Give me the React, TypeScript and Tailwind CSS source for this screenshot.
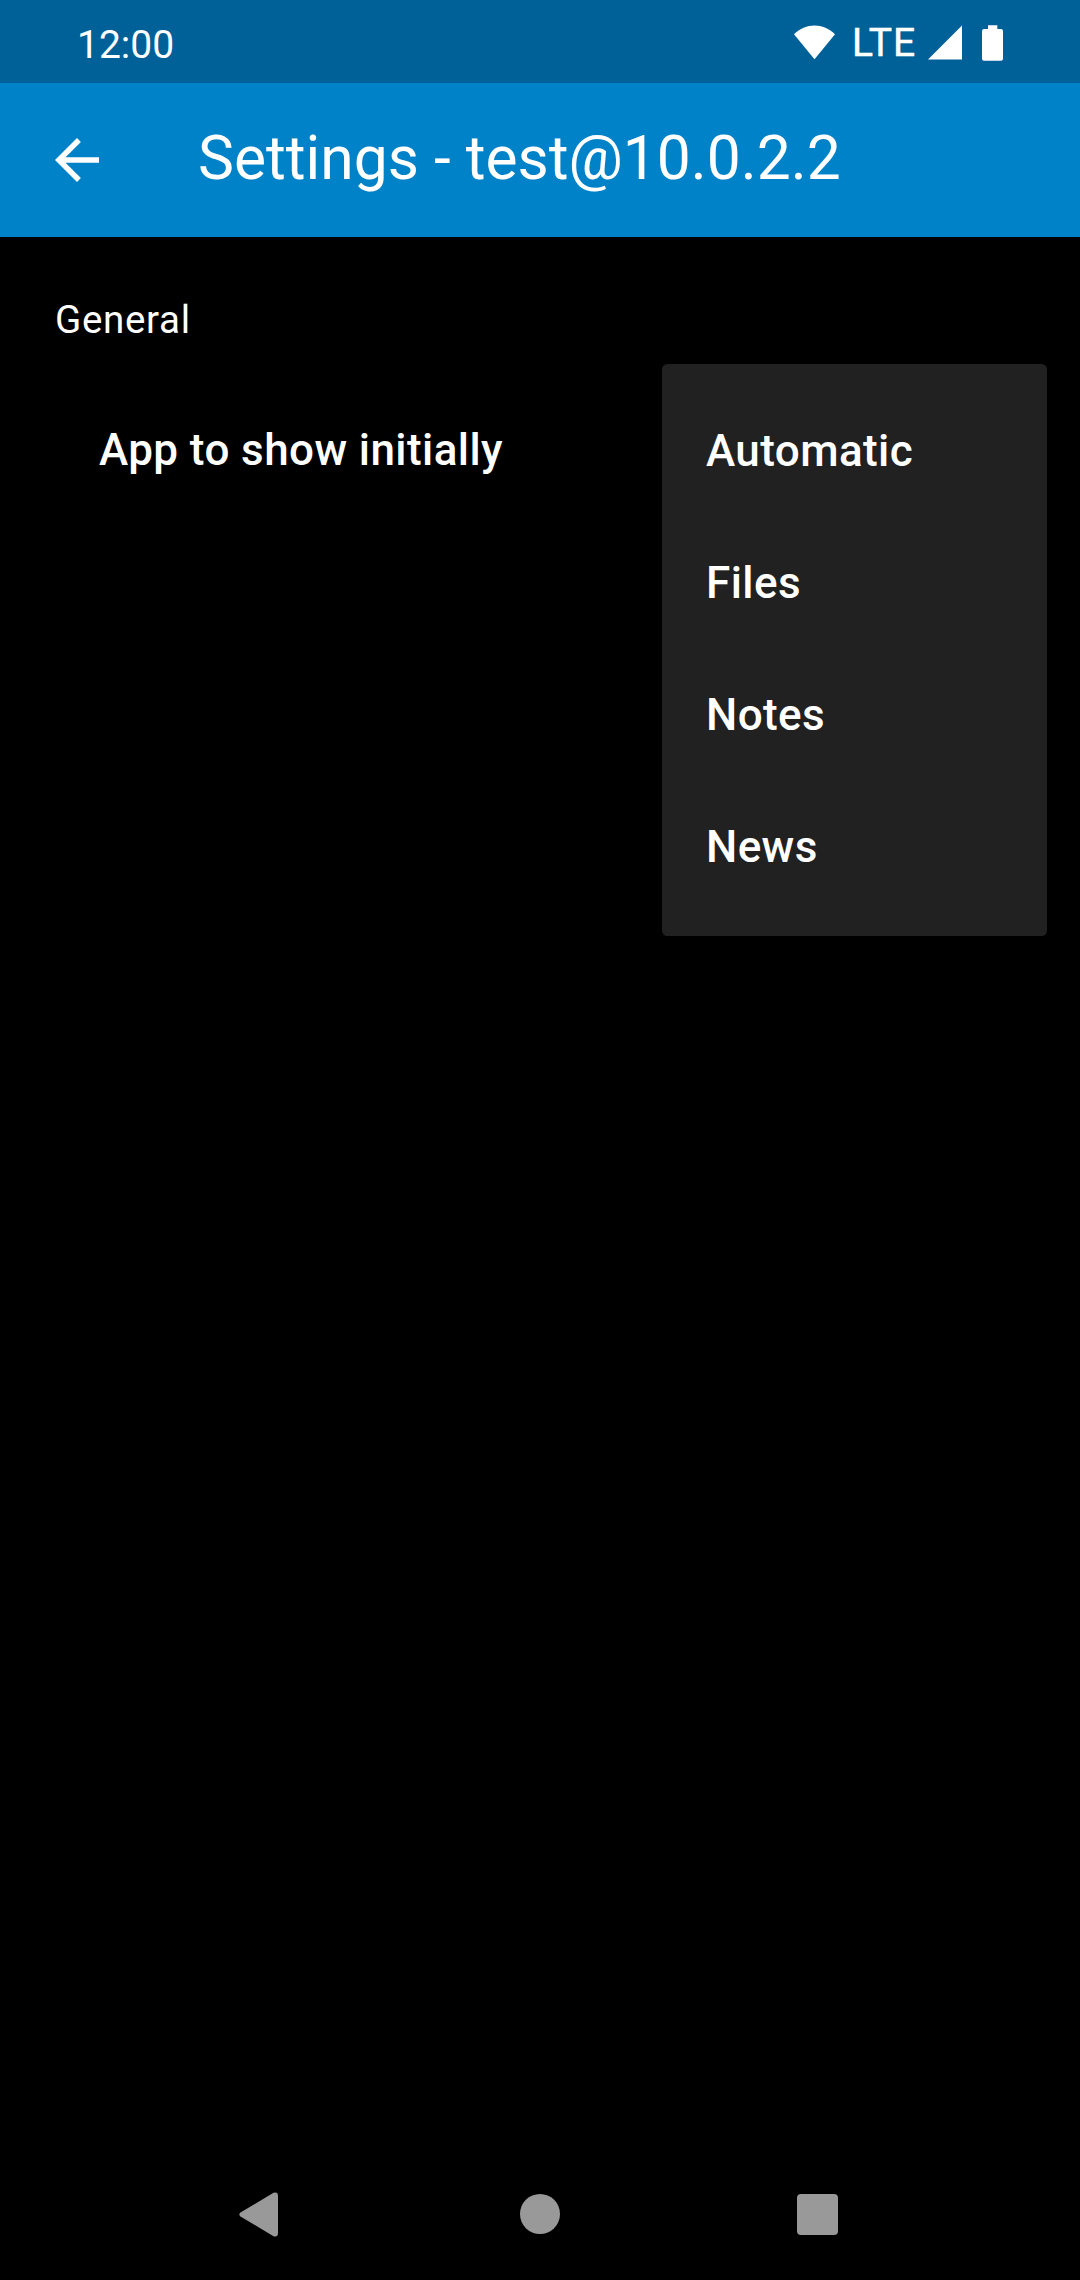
const items = ['Automatic', 'Files', 'Notes', 'News'];

export default function App() {
  return (
    <div className="relative flex h-[2280px] w-[1080px] flex-col overflow-hidden bg-black font-['Roboto',sans-serif] text-white">
      <div className="flex h-[83px] items-start justify-between bg-[#006199] pl-[77px] pr-[77px]">
        <span className="pt-[22px] text-[39px] leading-[46px]">12:00</span>
        <div className="flex h-[83px] items-start">
          <svg className="mt-[25px] h-[34px] w-[41px]" viewBox="0 0 41 34" fill="#fff">
            <path d="M20.500 34.300 L0 9.300 C11.500 -2.600 29.500 -2.600 41 9.300 Z" />
          </svg>
          <span className="ml-[17px] mt-[20px] w-[66px] text-[39px] leading-[46px] tracking-[1px] [-webkit-text-stroke:0.5px_white]">LTE</span>
          <svg className="ml-[10px] mt-[25px] h-[35px] w-[34px]" viewBox="0 0 34 35" fill="#fff">
            <path d="M34 0.500 V34.500 H0 Z" />
          </svg>
          <svg className="ml-[20px] mt-[25px] h-[36px] w-[21px]" viewBox="0 0 21 36" fill="#fff">
            <path d="M6 0.300h9.300v3.700h3.700a2 2 0 0 1 2 2v27.700a2 2 0 0 1-2 2H2a2 2 0 0 1-2-2V6a2 2 0 0 1 2-2h4z" />
          </svg>
        </div>
      </div>
      <header className="flex h-[154px] items-center bg-[#0082c9] pl-[55px]">
        <svg className="h-[44px] w-[44px]" viewBox="4 4 16 16" fill="#fff">
          <path d="M20 11H7.830l5.590-5.590L12 4l-8 8 8 8 1.410-1.410L7.830 13H20v-2z" />
        </svg>
        <h1 className="mb-[3px] ml-[99px] text-[60.5px] leading-[71px]">Settings - test@10.0.2.2</h1>
      </header>
      <main className="flex flex-1">
        <div className="w-[662px]">
          <h2 className="pl-[55px] pt-[60px] text-[38.5px] leading-[46px] tracking-[0.6875px]">General</h2>
          <p className="pl-[99px] pt-[80px] text-[44px] font-medium leading-[54px] tracking-[0.4125px]">App to show initially</p>
        </div>
        <ul className="mt-[127px] h-[572px] w-[385px] rounded-[5.5px] bg-[#212121] py-[21px]">
          {items.map((item) => (
            <li key={item} className="flex h-[132px] items-center pl-[44px] text-[44px] font-medium tracking-[0.4125px]">{item}</li>
          ))}
        </ul>
      </main>
      <nav className="flex h-[132px] items-center">
        <svg className="ml-[239px] h-[45px] w-[39px]" viewBox="0 0 39 45" fill="#999">
          <path d="M1.500 20.500 L34.500 0.800 Q39 -0.500 39 4 V41 Q39 45.500 34.500 44.200 L1.500 24.500 Q-0.800 22.500 1.500 20.500Z" />
        </svg>
        <span className="ml-[242px] size-[40px] rounded-full bg-[#999]" />
        <span className="ml-[237px] size-[41px] rounded-[4px] bg-[#999]" />
      </nav>
    </div>
  );
}
